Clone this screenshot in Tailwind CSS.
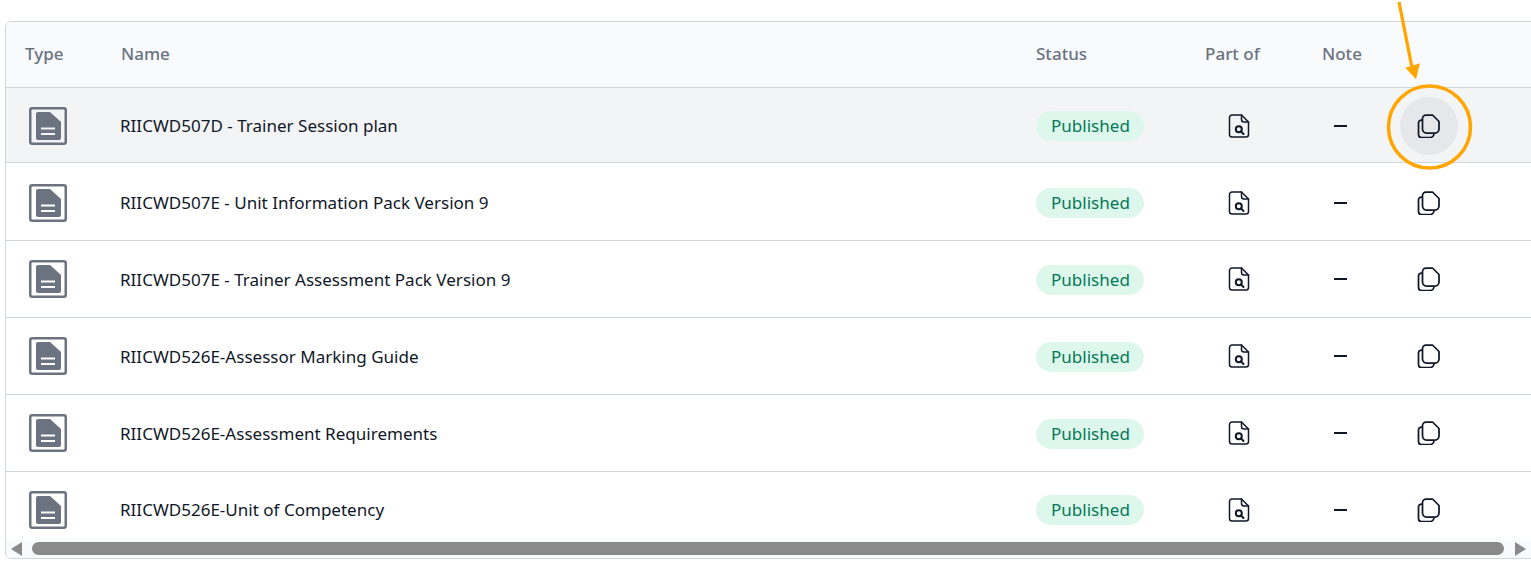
<!DOCTYPE html>
<html lang="en">
<head>
    <meta charset="UTF-8">
    <title>Documents</title>
    <script src="https://cdn.jsdelivr.net/npm/@tailwindcss/browser@4"></script>
</head>
<body class="bg-white h-[564px] overflow-hidden font-['Noto_Sans',sans-serif] text-[17.05px] text-gray-900">
    <div class="relative h-[564px] pt-[21px] pl-[5px]">
        <div class="w-[1540px] h-[538px] border border-gray-300 rounded-tl-md rounded-bl-md overflow-hidden flex flex-col">
            <div class="h-[518px] overflow-hidden">
                <table class="w-full table-fixed border-collapse text-left">
                    <colgroup>
                        <col class="w-[114px]">
                        <col class="w-[916px]">
                        <col class="w-[169px]">
                        <col class="w-[117px]">
                        <col class="w-[70px]">
                        <col>
                    </colgroup>
                    <thead class="bg-gray-50 text-gray-500 font-medium">
                        <tr class="h-[65px] border-b border-gray-300">
                            <th class="pl-[19px] pb-[1px] font-medium">Type</th>
                            <th class="pl-[1px] pb-[1px] font-medium">Name</th>
                            <th class="pb-[1px] font-medium">Status</th>
                            <th class="pb-[1px] font-medium">Part of</th>
                            <th class="pb-[1px] font-medium">Note</th>
                            <th></th>
                        </tr>
                    </thead>
                    <tbody>
                        <tr class="h-[75px] bg-gray-100 border-b border-gray-300">
                            <td class="pl-[23px] pt-[2px]"><svg class="w-[38px] h-[38px]" viewBox="0 0 38 38"><rect x="1.250" y="1.250" width="35.500" height="35.500" rx="2" fill="none" stroke="#6b7280" stroke-width="2.500"/><path d="M9 5h12l11 10v16a2 2 0 0 1-2 2H9a2 2 0 0 1-2-2V7a2 2 0 0 1 2-2z" fill="#6b7280"/><path d="M12 21.500h14M12 27h14" stroke="#f3f4f6" stroke-width="2"/></svg></td>
                            <td class="pt-[2px]">RIICWD507D - Trainer Session plan</td>
                            <td class="pt-[2px]"><span class="inline-block h-[30px] leading-[30px] pl-[15px] pr-[14px] rounded-full bg-[#def7ec] text-[#047857]">Published</span></td>
                            <td class="pl-[22px] pt-[2px]"><svg class="w-6 h-6" viewBox="0 0 24 24" fill="none" stroke="#111827" stroke-width="1.5" stroke-linecap="round" stroke-linejoin="round"><path d="M14.500 1H5a2.500 2.500 0 0 0-2.500 2.500v17A2.500 2.500 0 0 0 5 23h14a2.500 2.500 0 0 0 2.500-2.500V8z"/><path d="M14.500 1v4.500a2.500 2.500 0 0 0 2.500 2.500h4.500"/><circle cx="11.800" cy="15.300" r="3" stroke-width="2"/><path d="M14 17.500 16.500 20" stroke-width="2"/></svg></td>
                            <td class="pl-[12px] pt-[2px]"><span class="block w-[13px] h-[2px] bg-gray-900"></span></td>
                            <td class="pl-[8px] pt-[2px]"><span class="flex w-[58px] h-[58px] rounded-full bg-gray-200 items-center justify-center"><svg class="w-6 h-6" viewBox="0 0 24 24" fill="none" stroke="#111827" stroke-width="1.750" stroke-linejoin="round"><path d="M9 1h6.500L22 7.500V15a4 4 0 0 1-4 4h-8.500a4 4 0 0 1-4-4V4.500A3.500 3.500 0 0 1 9 1z"/><path d="M5.500 6H4.500a3 3 0 0 0-3 3v11.500a3 3 0 0 0 3 3H13a4 4 0 0 0 4-4V19"/></svg></span></td>
                        </tr>
                        <tr class="h-[78px] border-b border-gray-300">
                            <td class="pl-[23px] pt-[3px]"><svg class="w-[38px] h-[38px]" viewBox="0 0 38 38"><rect x="1.250" y="1.250" width="35.500" height="35.500" rx="2" fill="none" stroke="#6b7280" stroke-width="2.500"/><path d="M9 5h12l11 10v16a2 2 0 0 1-2 2H9a2 2 0 0 1-2-2V7a2 2 0 0 1 2-2z" fill="#6b7280"/><path d="M12 21.500h14M12 27h14" stroke="#fff" stroke-width="2"/></svg></td>
                            <td class="pt-[3px]">RIICWD507E - Unit Information Pack Version 9</td>
                            <td class="pt-[3px]"><span class="inline-block h-[30px] leading-[30px] pl-[15px] pr-[14px] rounded-full bg-[#def7ec] text-[#047857]">Published</span></td>
                            <td class="pl-[22px] pt-[3px]"><svg class="w-6 h-6" viewBox="0 0 24 24" fill="none" stroke="#111827" stroke-width="1.5" stroke-linecap="round" stroke-linejoin="round"><path d="M14.500 1H5a2.500 2.500 0 0 0-2.500 2.500v17A2.500 2.500 0 0 0 5 23h14a2.500 2.500 0 0 0 2.500-2.500V8z"/><path d="M14.500 1v4.500a2.500 2.500 0 0 0 2.500 2.500h4.500"/><circle cx="11.800" cy="15.300" r="3" stroke-width="2"/><path d="M14 17.500 16.500 20" stroke-width="2"/></svg></td>
                            <td class="pl-[12px] pt-[3px]"><span class="block w-[13px] h-[2px] bg-gray-900"></span></td>
                            <td class="pl-[8px] pt-[3px]"><span class="flex w-[58px] h-[58px] items-center justify-center"><svg class="w-6 h-6" viewBox="0 0 24 24" fill="none" stroke="#111827" stroke-width="1.750" stroke-linejoin="round"><path d="M9 1h6.500L22 7.500V15a4 4 0 0 1-4 4h-8.500a4 4 0 0 1-4-4V4.500A3.500 3.500 0 0 1 9 1z"/><path d="M5.500 6H4.500a3 3 0 0 0-3 3v11.500a3 3 0 0 0 3 3H13a4 4 0 0 0 4-4V19"/></svg></span></td>
                        </tr>
                        <tr class="h-[77px] border-b border-gray-300">
                            <td class="pl-[23px]"><svg class="w-[38px] h-[38px]" viewBox="0 0 38 38"><rect x="1.250" y="1.250" width="35.500" height="35.500" rx="2" fill="none" stroke="#6b7280" stroke-width="2.500"/><path d="M9 5h12l11 10v16a2 2 0 0 1-2 2H9a2 2 0 0 1-2-2V7a2 2 0 0 1 2-2z" fill="#6b7280"/><path d="M12 21.500h14M12 27h14" stroke="#fff" stroke-width="2"/></svg></td>
                            <td class="pt-[2px]">RIICWD507E - Trainer Assessment Pack Version 9</td>
                            <td class="pt-[2px]"><span class="inline-block h-[30px] leading-[30px] pl-[15px] pr-[14px] rounded-full bg-[#def7ec] text-[#047857]">Published</span></td>
                            <td class="pl-[22px]"><svg class="w-6 h-6" viewBox="0 0 24 24" fill="none" stroke="#111827" stroke-width="1.5" stroke-linecap="round" stroke-linejoin="round"><path d="M14.500 1H5a2.500 2.500 0 0 0-2.500 2.500v17A2.500 2.500 0 0 0 5 23h14a2.500 2.500 0 0 0 2.500-2.500V8z"/><path d="M14.500 1v4.500a2.500 2.500 0 0 0 2.500 2.500h4.500"/><circle cx="11.800" cy="15.300" r="3" stroke-width="2"/><path d="M14 17.500 16.500 20" stroke-width="2"/></svg></td>
                            <td class="pl-[12px]"><span class="block w-[13px] h-[2px] bg-gray-900"></span></td>
                            <td class="pl-[8px]"><span class="flex w-[58px] h-[58px] items-center justify-center"><svg class="w-6 h-6" viewBox="0 0 24 24" fill="none" stroke="#111827" stroke-width="1.750" stroke-linejoin="round"><path d="M9 1h6.500L22 7.500V15a4 4 0 0 1-4 4h-8.500a4 4 0 0 1-4-4V4.500A3.500 3.500 0 0 1 9 1z"/><path d="M5.500 6H4.500a3 3 0 0 0-3 3v11.500a3 3 0 0 0 3 3H13a4 4 0 0 0 4-4V19"/></svg></span></td>
                        </tr>
                        <tr class="h-[77px] border-b border-gray-300">
                            <td class="pl-[23px]"><svg class="w-[38px] h-[38px]" viewBox="0 0 38 38"><rect x="1.250" y="1.250" width="35.500" height="35.500" rx="2" fill="none" stroke="#6b7280" stroke-width="2.500"/><path d="M9 5h12l11 10v16a2 2 0 0 1-2 2H9a2 2 0 0 1-2-2V7a2 2 0 0 1 2-2z" fill="#6b7280"/><path d="M12 21.500h14M12 27h14" stroke="#fff" stroke-width="2"/></svg></td>
                            <td class="pt-[2px]">RIICWD526E-Assessor Marking Guide</td>
                            <td class="pt-[2px]"><span class="inline-block h-[30px] leading-[30px] pl-[15px] pr-[14px] rounded-full bg-[#def7ec] text-[#047857]">Published</span></td>
                            <td class="pl-[22px]"><svg class="w-6 h-6" viewBox="0 0 24 24" fill="none" stroke="#111827" stroke-width="1.5" stroke-linecap="round" stroke-linejoin="round"><path d="M14.500 1H5a2.500 2.500 0 0 0-2.500 2.500v17A2.500 2.500 0 0 0 5 23h14a2.500 2.500 0 0 0 2.500-2.500V8z"/><path d="M14.500 1v4.500a2.500 2.500 0 0 0 2.500 2.500h4.500"/><circle cx="11.800" cy="15.300" r="3" stroke-width="2"/><path d="M14 17.500 16.500 20" stroke-width="2"/></svg></td>
                            <td class="pl-[12px]"><span class="block w-[13px] h-[2px] bg-gray-900"></span></td>
                            <td class="pl-[8px]"><span class="flex w-[58px] h-[58px] items-center justify-center"><svg class="w-6 h-6" viewBox="0 0 24 24" fill="none" stroke="#111827" stroke-width="1.750" stroke-linejoin="round"><path d="M9 1h6.500L22 7.500V15a4 4 0 0 1-4 4h-8.500a4 4 0 0 1-4-4V4.500A3.500 3.500 0 0 1 9 1z"/><path d="M5.500 6H4.500a3 3 0 0 0-3 3v11.500a3 3 0 0 0 3 3H13a4 4 0 0 0 4-4V19"/></svg></span></td>
                        </tr>
                        <tr class="h-[77px] border-b border-gray-300">
                            <td class="pl-[23px]"><svg class="w-[38px] h-[38px]" viewBox="0 0 38 38"><rect x="1.250" y="1.250" width="35.500" height="35.500" rx="2" fill="none" stroke="#6b7280" stroke-width="2.500"/><path d="M9 5h12l11 10v16a2 2 0 0 1-2 2H9a2 2 0 0 1-2-2V7a2 2 0 0 1 2-2z" fill="#6b7280"/><path d="M12 21.500h14M12 27h14" stroke="#fff" stroke-width="2"/></svg></td>
                            <td class="pt-[2px]">RIICWD526E-Assessment Requirements</td>
                            <td class="pt-[2px]"><span class="inline-block h-[30px] leading-[30px] pl-[15px] pr-[14px] rounded-full bg-[#def7ec] text-[#047857]">Published</span></td>
                            <td class="pl-[22px]"><svg class="w-6 h-6" viewBox="0 0 24 24" fill="none" stroke="#111827" stroke-width="1.5" stroke-linecap="round" stroke-linejoin="round"><path d="M14.500 1H5a2.500 2.500 0 0 0-2.500 2.500v17A2.500 2.500 0 0 0 5 23h14a2.500 2.500 0 0 0 2.500-2.500V8z"/><path d="M14.500 1v4.500a2.500 2.500 0 0 0 2.500 2.500h4.500"/><circle cx="11.800" cy="15.300" r="3" stroke-width="2"/><path d="M14 17.500 16.500 20" stroke-width="2"/></svg></td>
                            <td class="pl-[12px]"><span class="block w-[13px] h-[2px] bg-gray-900"></span></td>
                            <td class="pl-[8px]"><span class="flex w-[58px] h-[58px] items-center justify-center"><svg class="w-6 h-6" viewBox="0 0 24 24" fill="none" stroke="#111827" stroke-width="1.750" stroke-linejoin="round"><path d="M9 1h6.500L22 7.500V15a4 4 0 0 1-4 4h-8.500a4 4 0 0 1-4-4V4.500A3.500 3.500 0 0 1 9 1z"/><path d="M5.500 6H4.500a3 3 0 0 0-3 3v11.500a3 3 0 0 0 3 3H13a4 4 0 0 0 4-4V19"/></svg></span></td>
                        </tr>
                        <tr class="h-[77px]">
                            <td class="pl-[23px]"><svg class="w-[38px] h-[38px]" viewBox="0 0 38 38"><rect x="1.250" y="1.250" width="35.500" height="35.500" rx="2" fill="none" stroke="#6b7280" stroke-width="2.500"/><path d="M9 5h12l11 10v16a2 2 0 0 1-2 2H9a2 2 0 0 1-2-2V7a2 2 0 0 1 2-2z" fill="#6b7280"/><path d="M12 21.500h14M12 27h14" stroke="#fff" stroke-width="2"/></svg></td>
                            <td>RIICWD526E-Unit of Competency</td>
                            <td><span class="inline-block h-[30px] leading-[30px] pl-[15px] pr-[14px] rounded-full bg-[#def7ec] text-[#047857]">Published</span></td>
                            <td class="pl-[22px]"><svg class="w-6 h-6" viewBox="0 0 24 24" fill="none" stroke="#111827" stroke-width="1.5" stroke-linecap="round" stroke-linejoin="round"><path d="M14.500 1H5a2.500 2.500 0 0 0-2.500 2.500v17A2.500 2.500 0 0 0 5 23h14a2.500 2.500 0 0 0 2.500-2.500V8z"/><path d="M14.500 1v4.500a2.500 2.500 0 0 0 2.500 2.500h4.500"/><circle cx="11.800" cy="15.300" r="3" stroke-width="2"/><path d="M14 17.500 16.500 20" stroke-width="2"/></svg></td>
                            <td class="pl-[12px]"><span class="block w-[13px] h-[2px] bg-gray-900"></span></td>
                            <td class="pl-[8px]"><span class="flex w-[58px] h-[58px] items-center justify-center"><svg class="w-6 h-6" viewBox="0 0 24 24" fill="none" stroke="#111827" stroke-width="1.750" stroke-linejoin="round"><path d="M9 1h6.500L22 7.500V15a4 4 0 0 1-4 4h-8.500a4 4 0 0 1-4-4V4.500A3.500 3.500 0 0 1 9 1z"/><path d="M5.500 6H4.500a3 3 0 0 0-3 3v11.500a3 3 0 0 0 3 3H13a4 4 0 0 0 4-4V19"/></svg></span></td>
                        </tr>
                    </tbody>
                </table>
            </div>
            <!-- scrollbar -->
            <div class="h-[19px] w-[1525px] bg-gray-50 flex items-center pl-[5px] pr-[5px]">
                <span class="w-0 h-0 border-y-[7px] border-y-transparent border-r-[11px] border-r-[#8a8a8a]"></span>
                <span class="flex-1 h-[13px] ml-[10px] mr-[11px] rounded-full bg-[#8a8a8a]"></span>
                <span class="w-0 h-0 border-y-[7px] border-y-transparent border-l-[11px] border-l-[#8a8a8a]"></span>
            </div>
        </div>
        <!-- annotation -->
        <svg class="absolute left-0 top-0 w-[1531px] h-[564px] pointer-events-none" viewBox="0 0 1531 564" fill="none">
            <circle cx="1429.500" cy="127" r="41" stroke="#ffa500" stroke-width="3.500"/>
            <path d="M1399 2 1411.700 66" stroke="#ffa500" stroke-width="3.300"/>
            <path d="M1405.300 67.700 1420 63.300 1416 79.300z" fill="#ffa500"/>
        </svg>
    </div>
</body>
</html>
